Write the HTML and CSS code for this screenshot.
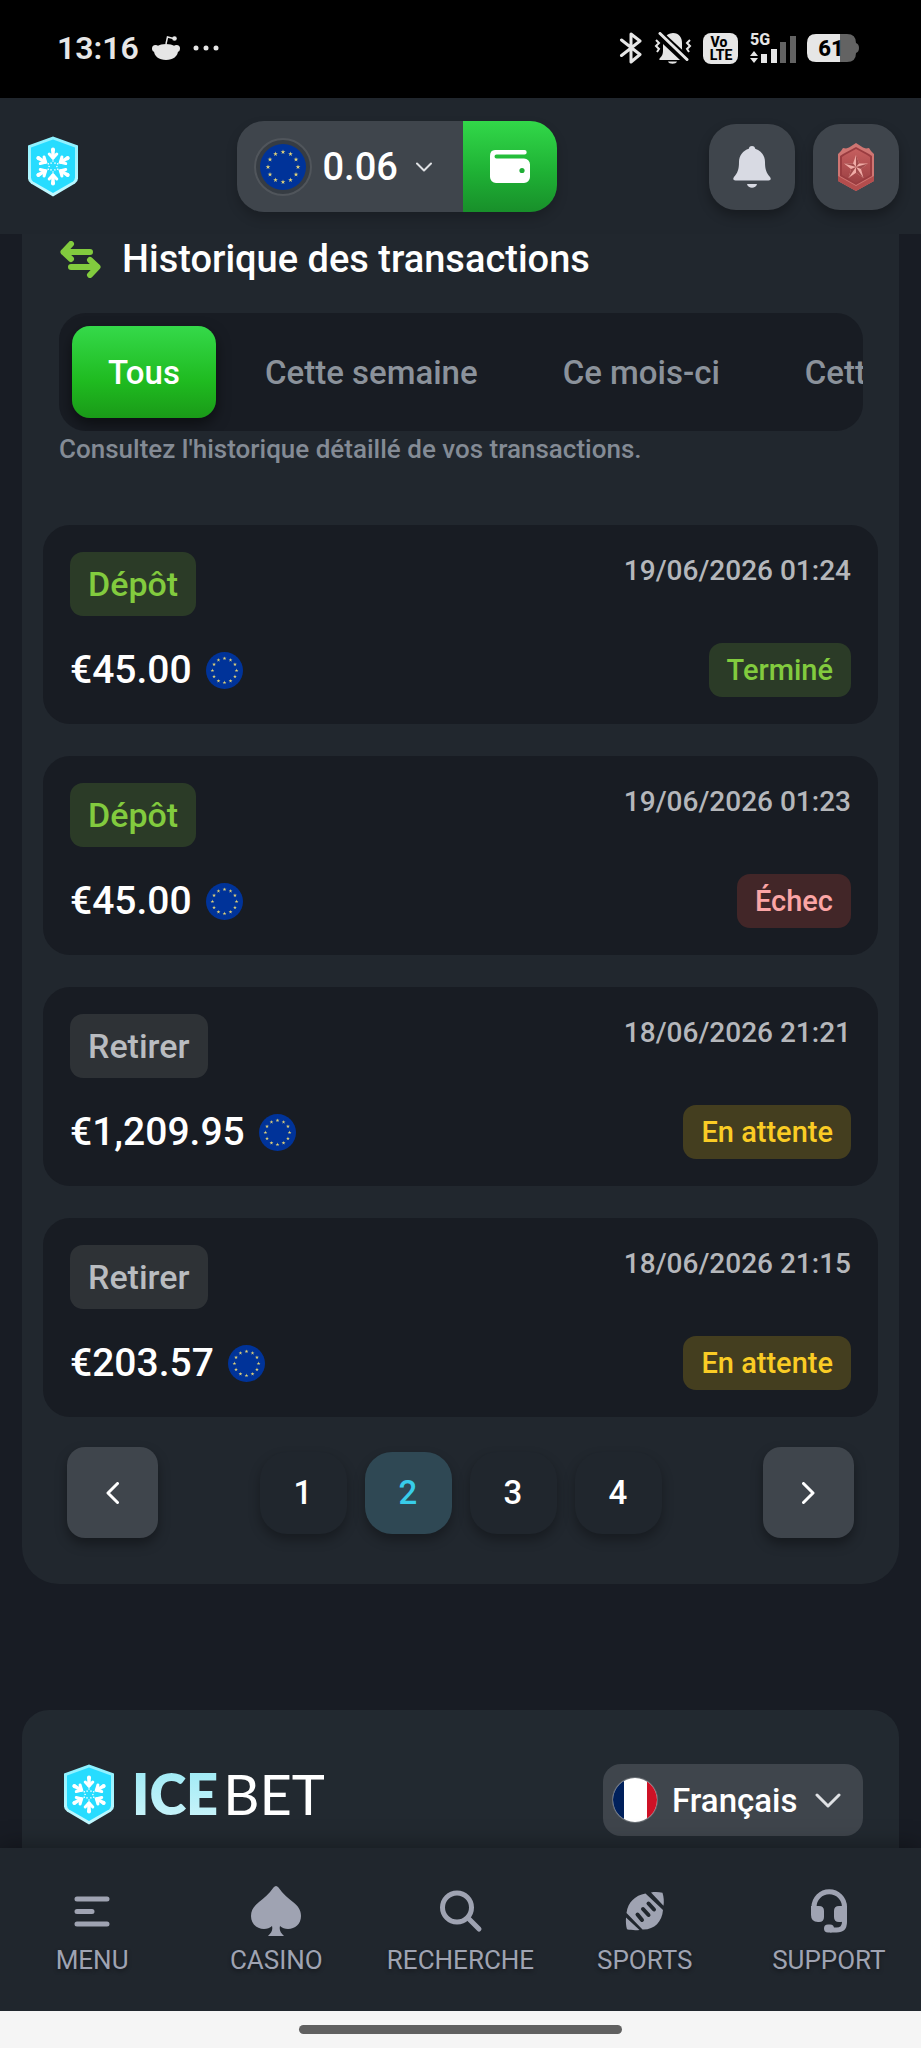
FILE: index.html
```html
<!DOCTYPE html>
<html lang="fr">
<head>
<meta charset="utf-8">
<meta name="viewport" content="width=device-width, initial-scale=1">
<title>Historique des transactions</title>
<link rel="stylesheet" href="styles.css">
</head>
<body>
<svg class="sprite" aria-hidden="true">
  <defs>
    <linearGradient id="shield-edge" x1="0" y1="0" x2="0" y2="1"><stop offset="0" stop-color="#8af1ff"/><stop offset="1" stop-color="#c4f8ff"/></linearGradient>
    <linearGradient id="ruby" x1="0" y1="0" x2="0" y2="1"><stop offset="0" stop-color="#c65f5f"/><stop offset="1" stop-color="#9c4043"/></linearGradient>
    <polygon id="star" points="0,-2.5 .56,-.77 2.38,-.77 .91,.29 1.47,2.02 0,.95 -1.47,2.02 -.91,.29 -2.38,-.77 -.56,-.77"/>
    <g id="flake-arm" fill="none" stroke="#fff" stroke-linecap="round"><path d="M0-9V-16.500" stroke-width="3.500"/><path d="M-3.800-12.500L0-8.500l3.800-4" stroke-width="3"/><path d="M0-17v.5" stroke-width="4"/><path d="M0-5.500v.1M2-3.400v.1" stroke-width="1.500"/></g>
  </defs>
  <symbol id="eu" viewBox="-23 -23 46 46">
    <circle r="23" fill="#003399"/>
    <g fill="#e0d27a">
      <use href="#star" y="-15"/><use href="#star" x="7.500" y="-13"/><use href="#star" x="13" y="-7.500"/><use href="#star" x="15"/>
      <use href="#star" x="13" y="7.500"/><use href="#star" x="7.500" y="13"/><use href="#star" y="15"/><use href="#star" x="-7.500" y="13"/>
      <use href="#star" x="-13" y="7.500"/><use href="#star" x="-15"/><use href="#star" x="-13" y="-7.500"/><use href="#star" x="-7.500" y="-13"/>
    </g>
  </symbol>
  <symbol id="shield" viewBox="-25 -30 50 60">
    <path d="M0-30L25-21V12Q25 15 22 17L0 30-22 17Q-25 15-25 12V-21z" fill="url(#shield-edge)"/>
    <path d="M0-27L22-19V11Q22 13 20 15L0 26.500-20 15Q-22 13-22 11V-19z" fill="#27dcff"/>
    <use href="#flake-arm"/><use href="#flake-arm" transform="rotate(60)"/><use href="#flake-arm" transform="rotate(120)"/>
    <use href="#flake-arm" transform="rotate(180)"/><use href="#flake-arm" transform="rotate(240)"/><use href="#flake-arm" transform="rotate(300)"/>
  </symbol>
</svg>

<div class="statusbar">
  <div class="status-group">
    <span class="clock">13:16</span>
    <svg class="ico-reddit" viewBox="0 0 28 24" fill="#e6e6e6"><path d="M14 8c7 0 12 3 12 7 0 5-5 9-12 9S2 20 2 15c0-4 5-7 12-7z"/><circle cx="3.500" cy="12.500" r="3.500"/><circle cx="24.500" cy="12.500" r="3.500"/><circle cx="22.500" cy="2.500" r="2.300"/><path d="M14 8l1.500-7 6 1.500" fill="none" stroke="#e6e6e6" stroke-width="1.500"/></svg>
    <svg class="ico-dots" viewBox="0 0 26 6" fill="#e6e6e6"><circle cx="3" cy="3" r="2.500"/><circle cx="13" cy="3" r="2.500"/><circle cx="23" cy="3" r="2.500"/></svg>
  </div>
  <div class="status-group status-right">
    <svg class="ico-bt" viewBox="0 0 24 32" fill="none" stroke="#e6e6e6" stroke-width="3" stroke-linejoin="round" stroke-linecap="round"><path d="M2.500 8L21 22.500 12 30V2l9 7L2.500 23.500"/></svg>
    <svg class="ico-mute" viewBox="0 0 38 32" fill="#e6e6e6"><path d="M10 7C12 3 15 1 19 1c6 0 9 4.500 9 10v4c0 2 0 4 1 5z"/><path d="M9 12L26 28H6c-1 0-1-1 0-2 2-2 3-4 3-7z"/><path d="M14 29.500h9c-1 3-8 3-9 0z"/><path d="M6 2L33 27" stroke="#000" stroke-width="7"/><path d="M6 1.500L33 27.500" stroke="#e6e6e6" stroke-width="3" stroke-linecap="round"/><path d="M2 8l3 3-3 3 3 3-2 3M36 8l-3 3 3 3-3 3 2 3" fill="none" stroke="#e6e6e6" stroke-width="2"/></svg>
    <svg class="ico-volte" viewBox="0 0 35 31"><rect width="35" height="31" rx="8" fill="#e6e6e6"/><text x="16" y="14" class="svg-bold" font-size="14">Vo</text><text x="18" y="27" class="svg-bold" font-size="14">LTE</text></svg>
    <svg class="ico-signal" viewBox="0 0 47 32"><text x="11" y="13" class="svg-bold svg-light" font-size="16">5G</text><path d="M1 24l4-5 4 5zM1 26l4 5 4-5z" fill="#e6e6e6"/><rect x="12" y="22" width="6" height="9" fill="#e6e6e6"/><rect x="22" y="17" width="6" height="14" fill="#e6e6e6"/><rect x="31" y="10" width="6" height="21" fill="#636363"/><rect x="41" y="4" width="6" height="27" fill="#636363"/></svg>
    <svg class="ico-batt" viewBox="0 0 52 28"><path d="M33 0h7q9 0 9 9 3 1 3 5t-3 5q0 9-9 9h-7z" fill="#636363"/><path d="M9 0h24v28H9q-9 0-9-9V9q0-9 9-9z" fill="#e6e6e6"/><text x="24" y="22" class="svg-bold" font-size="22">61</text></svg>
  </div>
</div>

<header class="topbar">
  <a class="brand" href="#" aria-label="Icebet"><svg class="shield"><use href="#shield"/></svg></a>
  <div class="wallet">
    <button class="balance" type="button" aria-haspopup="listbox">
      <span class="coin"><svg class="flag-lg"><use href="#eu"/></svg></span>
      <span class="balance-value">0.06</span>
      <svg class="chev-sm" viewBox="0 0 16 10" fill="none" stroke="#dfe1e4" stroke-width="2" stroke-linecap="round" stroke-linejoin="round"><path d="M1 1.500l7 7 7-7"/></svg>
    </button>
    <button class="deposit" type="button" aria-label="Portefeuille">
      <svg viewBox="0 0 40 33"><path d="M5 0H34.500a2.200 2.200 0 0 1 0 4.400H6.500a2 2 0 0 0 0 4H34a6 6 0 0 1 6 6V27a6 6 0 0 1-6 6H6a6 6 0 0 1-6-6V6Q0 0 5 0z" fill="#fff"/><circle cx="32" cy="20.500" r="2.600" fill="#1fae36"/></svg>
    </button>
  </div>
  <div class="actions">
    <button class="action" type="button" aria-label="Notifications">
      <svg class="ico-bell" viewBox="0 0 38 42" fill="#d8dae3"><path d="M19 0c2 0 3 1.200 3.200 2.700C28 4.500 32 9.500 32 16c0 8 1.500 10.500 5 15 1.500 2 .5 3.500-1.500 3.500h-33C.5 34.500-.5 33 1 31c3.500-4.500 5-7 5-15C6 9.500 10 4.500 15.800 2.700 16 1.200 17 0 19 0zM14 38h10c-1 5-9 5-10 0z"/></svg>
    </button>
    <button class="action" type="button" aria-label="Rang">
      <svg class="ico-rank" viewBox="0 0 38 48"><path d="M19 0l7 4.500 3 1 3-.5 2 3 3 3v27L19 48 1 38V11l3-3 2-3 3 .5 3-1z" fill="#cf7572"/><path d="M1 33l18 10 18-10v5L19 48 1 38z" fill="#b34d4d"/><path d="M19 4l13 7 3 2v20L19 42 3 33V13l3-2z" fill="#9a3c40"/><path d="M19 6l11 6 3 2v18l-14 8-14-8V14l3-2z" fill="url(#ruby)"/><path d="M19 12l3 8.500h9l-7 5.500 2.500 9L19 29.700 11.500 35l2.500-9-7-5.500h9z" fill="#f0aba6"/><path d="M19 24V12l3 8.500zM19 24l12-3.500-7 5.500zM19 24l7.500 11-7.500-5.300zM19 24l-7.500 11 2.500-9zM19 24L7 20.500h9z" fill="#a04a4b"/></svg>
    </button>
  </div>
</header>

<main class="page">
  <section class="panel">
    <h1 class="title">
      <svg class="ico-swap" viewBox="0 0 41 37" fill="none" stroke="#82cb3e" stroke-width="6" stroke-linecap="round" stroke-linejoin="round"><path d="M30 11H3.500M11 3L3.500 11 11 18M11 26H37M30 19l7.500 7L30 34"/></svg>
      Historique des transactions
    </h1>
    <div class="tabs" role="tablist">
      <button class="tab tab-on" type="button" role="tab" aria-selected="true">Tous</button>
      <button class="tab" type="button" role="tab">Cette semaine</button>
      <button class="tab" type="button" role="tab">Ce mois-ci</button>
      <button class="tab" type="button" role="tab">Cette année</button>
    </div>
    <p class="hint">Consultez l'historique détaillé de vos transactions.</p>

    <ul class="list">
      <li class="card">
        <div class="row row-top"><span class="kind kind-in">Dépôt</span><time class="date">19/06/2026 01:24</time></div>
        <div class="row"><span class="amount">€45.00 <svg class="flag-sm"><use href="#eu"/></svg></span><span class="state state-ok">Terminé</span></div>
      </li>
      <li class="card">
        <div class="row row-top"><span class="kind kind-in">Dépôt</span><time class="date">19/06/2026 01:23</time></div>
        <div class="row"><span class="amount">€45.00 <svg class="flag-sm"><use href="#eu"/></svg></span><span class="state state-fail">Échec</span></div>
      </li>
      <li class="card">
        <div class="row row-top"><span class="kind kind-out">Retirer</span><time class="date">18/06/2026 21:21</time></div>
        <div class="row"><span class="amount">€1,209.95 <svg class="flag-sm"><use href="#eu"/></svg></span><span class="state state-wait">En attente</span></div>
      </li>
      <li class="card">
        <div class="row row-top"><span class="kind kind-out">Retirer</span><time class="date">18/06/2026 21:15</time></div>
        <div class="row"><span class="amount">€203.57 <svg class="flag-sm"><use href="#eu"/></svg></span><span class="state state-wait">En attente</span></div>
      </li>
    </ul>

    <nav class="pager" aria-label="Pagination">
      <button class="step" type="button" aria-label="Précédent"><svg viewBox="0 0 13 22"><path d="M11.500 1.500L2 11l9.500 9.500"/></svg></button>
      <div class="pages">
        <button class="num" type="button">1</button>
        <button class="num num-on" type="button" aria-current="page">2</button>
        <button class="num" type="button">3</button>
        <button class="num" type="button">4</button>
      </div>
      <button class="step" type="button" aria-label="Suivant"><svg viewBox="0 0 13 22"><path d="M1.500 1.500L11 11l-9.500 9.500"/></svg></button>
    </nav>
  </section>

  <footer class="foot">
    <a class="logo" href="#"><svg class="shield"><use href="#shield"/></svg><span class="word"><b class="ice">ICE</b><span class="bet">BET</span></span></a>
    <label class="lang">
      <svg class="flag-fr" viewBox="0 0 46 46"><clipPath id="disc"><circle cx="23" cy="23" r="22"/></clipPath><circle cx="23" cy="23" r="23" fill="#6b7076"/><g clip-path="url(#disc)"><path fill="#fff" d="M0 0h46v46H0z"/><path fill="#00205b" d="M0 0h12v46H0z"/><path fill="#ce1126" d="M35 0h11v46H35z"/></g></svg>
      <select class="lang-select" aria-label="Langue"><option>Français</option></select>
      <svg class="chev-md" viewBox="0 0 26 15" fill="none" stroke="#dfe1e4" stroke-width="3" stroke-linecap="round" stroke-linejoin="round"><path d="M2 2l11 11L24 2"/></svg>
    </label>
  </footer>
</main>

<nav class="tabbar">
  <a class="item" href="#"><svg viewBox="0 0 56 56" fill="none" stroke="#9fa3b2" stroke-width="5" stroke-linecap="round"><path d="M13 18h30M13 30.500h15M13 43h30"/></svg>MENU</a>
  <a class="item" href="#"><svg viewBox="0 0 56 56" fill="#9fa3b2"><path d="M28 5q1.300 0 2.500 1.500C35 13 40 17 45 21c5 4 8 8 8 14 0 8-6 13-13 13-3 0-6-1-8-3-1 4 .5 7 4 10H20c3.500-3 5-6 4-10-2 2-5 3-8 3C9 48 3 43 3 35c0-6 3-10 8-14 5-4 10-8 14.500-14.500Q26.700 5 28 5z"/></svg>CASINO</a>
  <a class="item" href="#"><svg viewBox="0 0 56 56" fill="none" stroke="#9fa3b2" stroke-width="5" stroke-linecap="round"><circle cx="25" cy="26.500" r="14.500"/><path d="M36 37l11 11"/></svg>RECHERCHE</a>
  <a class="item" href="#"><svg viewBox="0 0 56 56" fill="#9fa3b2"><path d="M34 11.500c4-.8 8-.5 11.500.2 1.300 4.300 1.700 9 1 13zM28.500 12.500L46 29c-1 12-9 20-20.500 19.500L9.500 32C11 21 18 14.500 28.500 12.500zM9 36.500L22.500 49c-4 .4-9 .2-12.500-.7C9 45 8.700 41 9 36.500z"/><path d="M20.500 33.500l4.500 5.500M26 28l5.500 6M31.500 22.500l5.500 6" stroke="#20262d" stroke-width="4" stroke-linecap="round"/></svg>SPORTS</a>
  <a class="item" href="#"><svg viewBox="0 0 56 56" fill="none"><path d="M13 28v-2a15 15 0 0 1 30.500 0v15q0 8-8 8H29" stroke="#9fa3b2" stroke-width="5"/><path d="M10 25h8q5 0 5 5v6q0 5-5 5h-1q-7 0-7-7zM46 25h-8q-5 0-5 5v6q0 5 5 5h2q6 0 6-7z" fill="#9fa3b2"/><rect x="23" y="43.500" width="10" height="8" rx="4" fill="#9fa3b2"/></svg>SUPPORT</a>
</nav>
<div class="gesture"><span class="pill"></span></div>
</body>
</html>
```
FILE: styles.css
```css
* { box-sizing: border-box; }

body {
  margin: 0;
  height: 100vh;
  display: flex;
  flex-direction: column;
  overflow: hidden;
  background: #181c24;
  color: #fff;
  font-family: Roboto, "Liberation Sans", sans-serif;
  font-weight: 500;
}

button, select {
  border: 0;
  padding: 0;
  margin: 0;
  background: none;
  color: inherit;
  font: inherit;
  cursor: pointer;
}

a { color: inherit; text-decoration: none; }
svg { display: block; flex: none; }
.sprite { position: absolute; width: 0; height: 0; }

/* System status bar */
.statusbar {
  flex: none;
  height: 98px;
  padding: 0 62px 2px 57px;
  display: flex;
  align-items: center;
  justify-content: space-between;
  background: #000;
}
.status-group { display: flex; align-items: center; gap: 13px; }
.status-right { gap: 11px; }
.clock { font-size: 32px; font-weight: 600; line-height: 40px; color: #e6e6e6; }
.ico-reddit { width: 28px; height: 24px; }
.ico-dots { width: 26px; height: 6px; }
.ico-bt { width: 24px; height: 32px; }
.ico-mute { width: 38px; height: 32px; }
.ico-volte { width: 35px; height: 31px; }
.ico-signal { width: 47px; height: 32px; overflow: visible; }
.ico-batt { width: 52px; height: 28px; }
.svg-bold { font-weight: 800; text-anchor: middle; fill: #000; }
.svg-light { fill: #e6e6e6; }

/* Header */
.topbar {
  flex: none;
  padding: 23px 22px 22px 28px;
  display: flex;
  align-items: center;
  justify-content: space-between;
  background: #20262d;
}
.brand { padding-right: 6px; }
.shield { width: 50px; height: 61px; }
.wallet {
  display: flex;
  height: 91px;
  border-radius: 27px;
  overflow: hidden;
  box-shadow: 0 6px 12px rgba(0, 0, 0, .2);
}
.balance {
  width: 226px;
  padding-left: 17px;
  display: flex;
  align-items: center;
  background: #3f454c;
}
.coin {
  width: 58px;
  height: 58px;
  margin-right: 11px;
  display: grid;
  place-items: center;
  border: 2px solid #50555b;
  border-radius: 50%;
  background: #363c43;
}
.flag-lg { width: 46px; height: 46px; }
.flag-sm { width: 37px; height: 37px; }
.balance-value { font-size: 38px; }
.chev-sm { width: 16px; height: 10px; margin-left: 18px; }
.deposit {
  width: 94px;
  display: grid;
  place-items: center;
  background: linear-gradient(#32d849, #1fb235 55%, #188f2a);
}
.deposit svg { width: 40px; height: 33px; }
.actions { display: flex; gap: 18px; }
.action {
  width: 86px;
  height: 86px;
  display: grid;
  place-items: center;
  border-radius: 27px;
  background: #3f454c;
  box-shadow: 0 6px 12px rgba(0, 0, 0, .3);
}
.ico-bell { width: 38px; height: 42px; }
.ico-rank { width: 38px; height: 48px; }

/* Content */
.page {
  flex: 1;
  min-height: 0;
  overflow: hidden;
  padding: 0 22px;
}
.panel {
  padding: 0 21px 46px;
  border-radius: 0 0 37px 37px;
  background: #21272e;
}
.title {
  margin: 0;
  padding: 0 16px;
  display: flex;
  align-items: center;
  gap: 20px;
  font-size: 38px;
  font-weight: 500;
  line-height: 50px;
}
.ico-swap { width: 43px; height: 37px; }
.tabs {
  margin: 29px 15px 0 16px;
  padding: 13px;
  display: flex;
  gap: 13px;
  overflow: hidden;
  border-radius: 27px;
  background: #181c23;
}
.tab {
  flex: none;
  height: 92px;
  padding: 0 36px;
  border-radius: 18px;
  font-size: 33px;
  color: #8b929b;
}
.tab-on {
  color: #fff;
  background: linear-gradient(#35d94a, #1fbb20 60%, #1a9a18);
  box-shadow: 0 6px 14px rgba(0, 0, 0, .5);
}
.hint {
  margin: 0;
  padding: 0 16px;
  font-size: 26px;
  line-height: 36px;
  color: #848b95;
}
.list {
  margin: 58px 0 0;
  padding: 0;
  display: grid;
  gap: 32px;
  list-style: none;
}
.card {
  padding: 27px;
  display: grid;
  gap: 27px;
  border-radius: 27px;
  background: #181c23;
}
.row { display: flex; align-items: center; justify-content: space-between; }
.row-top { align-items: flex-start; }
.kind, .state { padding: 0 18px; border-radius: 13px; }
.kind { font-size: 34px; line-height: 64px; }
.state { font-size: 29px; line-height: 54px; }
.kind-in, .state-ok { color: #82cb3e; background: #2b3b27; }
.kind-out { color: #b9bcc0; background: #2e3236; }
.state-fail { color: #fba5a5; background: #422628; }
.state-wait { color: #facc25; background: #443e1f; }
.date { font-size: 28px; line-height: 37px; color: #b5b7bb; }
.amount { display: flex; align-items: center; gap: 14px; font-size: 39px; line-height: 54px; }

/* Pagination */
.pager {
  margin-top: 30px;
  padding: 0 24px;
  display: flex;
  align-items: center;
  justify-content: space-between;
}
.pages { display: flex; gap: 18px; }
.num {
  width: 87px;
  height: 82px;
  border-radius: 27px;
  font-size: 33px;
  background: #20262d;
  box-shadow: 0 6px 12px rgba(0, 0, 0, .3);
}
.num-on { color: #38cdea; background: #2f4854; }
.step {
  width: 91px;
  height: 91px;
  display: grid;
  place-items: center;
  border-radius: 18px;
  background: #3f454c;
  box-shadow: 0 6px 12px rgba(0, 0, 0, .35);
}
.step svg { width: 13px; height: 22px; fill: none; stroke: #fff; stroke-width: 3px; stroke-linecap: round; stroke-linejoin: round; }

/* Footer */
.foot {
  margin-top: 126px;
  padding: 54px 36px 54px 42px;
  display: flex;
  align-items: flex-start;
  justify-content: space-between;
  border-radius: 27px;
  background: #222930;
}
.logo { display: flex; align-items: flex-start; gap: 18px; }
.word { display: flex; gap: 5px; font-family: Lato, sans-serif; font-size: 56px; line-height: 60px; }
.ice { font-weight: 800; color: transparent; background: linear-gradient(#9beaf5, #cdf4fa); background-clip: text; }
.bet { font-weight: 400; }
.lang {
  height: 72px;
  padding: 0 22px 0 9px;
  display: flex;
  align-items: center;
  border-radius: 18px;
  background: #3f454c;
}
.flag-fr { width: 46px; height: 46px; }
.lang-select { margin: 0 17px 0 14px; appearance: none; font-size: 33px; }
.chev-md { width: 26px; height: 15px; }

/* Bottom navigation */
.tabbar {
  position: relative;
  flex: none;
  padding: 33px 0 33px;
  display: grid;
  grid-template-columns: repeat(5, 1fr);
  background: #20262d;
  box-shadow: 0 -2px 22px rgba(0, 0, 0, .35);
}
.item {
  display: flex;
  flex-direction: column;
  align-items: center;
  gap: 5px;
  font-size: 26px;
  font-weight: 400;
  line-height: 36px;
  color: #9fa3b2;
  text-shadow: 0 2px 4px rgba(0, 0, 0, .4);
}
.item svg { width: 56px; height: 56px; }

.gesture {
  position: relative;
  flex: none;
  height: 37px;
  display: grid;
  place-items: center;
  background: #f5f5f5;
}
.pill { width: 35%; height: 9px; border-radius: 5px; background: #606060; }
```
